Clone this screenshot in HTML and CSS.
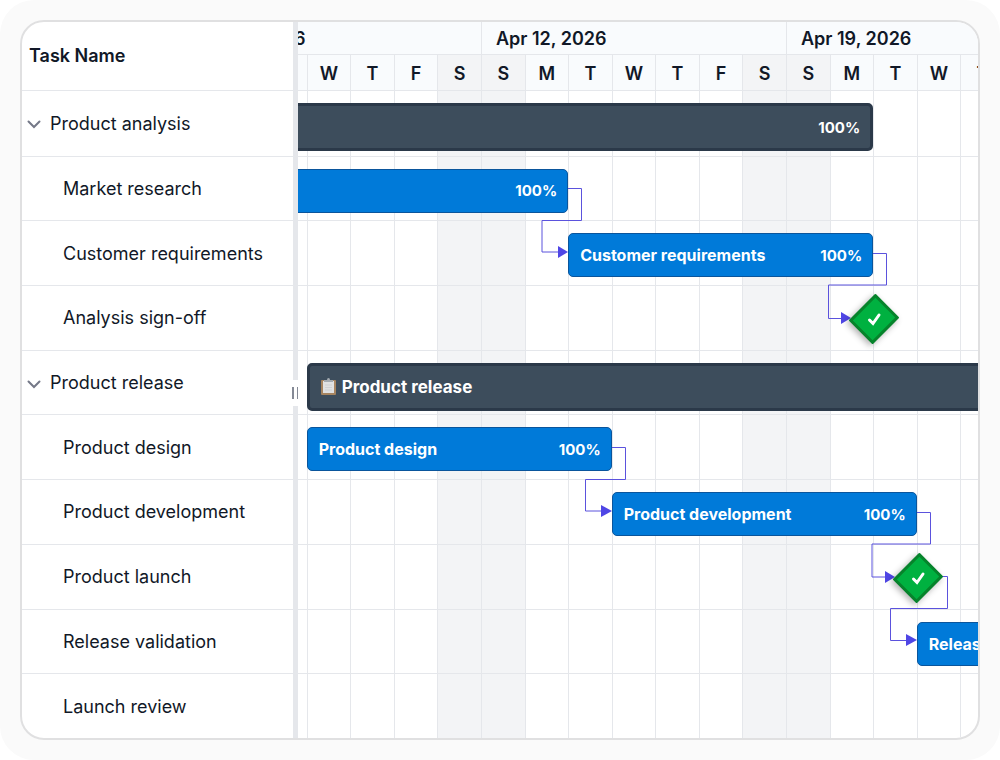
FILE: index.html
```html
<!DOCTYPE html>
<html lang="en">
<head>
  <meta charset="UTF-8">
  <meta name="viewport" content="width=device-width, initial-scale=1">
  <title>Gantt Chart</title>
  <link rel="stylesheet" href="styles.css">
</head>
<body>
  <main class="gantt">
    <table class="task-list">
      <thead>
        <tr><th scope="col">Task Name</th></tr>
      </thead>
      <tbody>
        <tr><td class="parent"><button class="toggle" type="button" aria-label="Collapse"><svg width="14" height="9" viewBox="0 0 14 9"><path d="M1.5 1.5 L7 7 L12.5 1.5" /></svg></button>Product analysis</td></tr>
        <tr><td>Market research</td></tr>
        <tr><td>Customer requirements</td></tr>
        <tr><td>Analysis sign-off</td></tr>
        <tr><td class="parent"><button class="toggle" type="button" aria-label="Collapse"><svg width="14" height="9" viewBox="0 0 14 9"><path d="M1.5 1.5 L7 7 L12.5 1.5" /></svg></button>Product release</td></tr>
        <tr><td>Product design</td></tr>
        <tr><td>Product development</td></tr>
        <tr><td>Product launch</td></tr>
        <tr><td>Release validation</td></tr>
        <tr><td>Launch review</td></tr>
      </tbody>
    </table>

    <div class="splitter">
      <button class="handle" type="button" aria-label="Resize"></button>
    </div>

    <div class="chart">
      <div class="timeline">
        <div class="weeks">
          <div>Apr 05, 2026</div>
          <div>Apr 12, 2026</div>
          <div>Apr 19, 2026</div>
        </div>
        <div class="days">
          <span class="weekend">S</span><span>M</span><span>T</span><span>W</span><span>T</span><span>F</span><span class="weekend">S</span>
          <span class="weekend">S</span><span>M</span><span>T</span><span>W</span><span>T</span><span>F</span><span class="weekend">S</span>
          <span class="weekend">S</span><span>M</span><span>T</span><span>W</span><span>T</span><span>F</span><span class="weekend">S</span>
        </div>

        <div class="plot">
          <div class="columns">
            <i class="weekend"></i><i></i><i></i><i></i><i></i><i></i><i class="weekend"></i>
            <i class="weekend"></i><i></i><i></i><i></i><i></i><i></i><i class="weekend"></i>
            <i class="weekend"></i><i></i><i></i><i></i><i></i><i></i><i class="weekend"></i>
          </div>

          <div class="rows">
            <div class="row">
              <div class="bar summary from-start to-apr20"><span></span><span class="percent">100%</span></div>
            </div>
            <div class="row">
              <div class="bar from-start to-apr13"><span></span><span class="percent">100%</span></div>
            </div>
            <div class="row">
              <div class="bar from-apr14 to-apr20"><span>Customer requirements</span><span class="percent">100%</span></div>
            </div>
            <div class="row">
              <div class="milestone from-apr21"><svg width="18" height="18" viewBox="0 0 18 18"><path d="M4.5 10 L8 13.5 L14 5" /></svg></div>
            </div>
            <div class="row">
              <div class="bar summary from-apr08 to-end">
                <span class="title"><svg class="clipboard" width="18" height="20" viewBox="0 0 18 20"><rect x="1" y="3" width="15" height="15" rx="1" fill="#a68460" /><rect x="3" y="4" width="11" height="12" fill="#e0e1e2" /><path d="M5 8h7M5 10.5h7M5 13h7" stroke="#cfd1d4" /><path d="M4 5 V3 H7 Q7 1 8.500 1 Q10 1 10 3 H13 V5 Z" fill="#a4aab0" /></svg>Product release</span>
              </div>
            </div>
            <div class="row">
              <div class="bar from-apr08 to-apr14"><span>Product design</span><span class="percent">100%</span></div>
            </div>
            <div class="row">
              <div class="bar from-apr15 to-apr21"><span>Product development</span><span class="percent">100%</span></div>
            </div>
            <div class="row">
              <div class="milestone from-apr22"><svg width="18" height="18" viewBox="0 0 18 18"><path d="M4.5 10 L8 13.5 L14 5" /></svg></div>
            </div>
            <div class="row">
              <div class="bar from-apr22 to-end"><span>Release validation</span></div>
            </div>
            <div class="row"></div>
          </div>

          <svg class="links" viewBox="0 0 915 647" preserveAspectRatio="none">
            <path class="line" d="M392 97.5 H405.5 V129.5 H366 V161 H383" />
            <path class="line" d="M697 162.5 H710.5 V194 H652.5 V227.5 H666" />
            <path class="line" d="M436 356.5 H449.5 V388.5 H409.5 V420 H426" />
            <path class="line" d="M741 421.5 H754.5 V453 H696 V486 H710" />
            <path class="line" d="M764 485.5 H771.5 V517.5 H714.5 V549.5 H731" />
            <path class="arrow" d="M382 155 L392 161 L382 167 Z" />
            <path class="arrow" d="M665 221 L675 227 L665 233 Z" />
            <path class="arrow" d="M425 414 L436 420 L425 426 Z" />
            <path class="arrow" d="M709 480 L719 486 L709 492 Z" />
            <path class="arrow" d="M730 543 L741 549 L730 555 Z" />
          </svg>
        </div>
      </div>
    </div>
  </main>
</body>
</html>
```
FILE: styles.css
```css
*,
*::before {
  box-sizing: border-box;
}
html {
  background: #fff;
}
body {
  display: flex;
  min-height: 100vh;
  margin: 0;
  padding: 20px;
  background: #fafafa;
  border-radius: 34px;
  font-family: Inter, "Liberation Sans", sans-serif;
  font-size: 18px;
  color: #111827;
}
button {
  margin: 0;
  padding: 0;
  border: none;
  background: none;
  cursor: pointer;
}
.gantt {
  display: flex;
  flex: 1;
  min-width: 0;
  background: #fff;
  border: 2px solid #e0e0e1;
  border-radius: 24px;
  overflow: hidden;
}

/* task list */
.task-list {
  flex: none;
  width: 271px;
  border-collapse: separate;
  border-spacing: 0;
}
.task-list th {
  height: 69px;
  padding: 0 7px 2px;
  border-bottom: 1px solid #e5e7eb;
  text-align: left;
  font-weight: 600;
}
.task-list td {
  height: 60px;
  padding: 0 0 0 41px;
  border-top: 1px solid #e5e7eb;
  white-space: nowrap;
}
.task-list tr:first-child td {
  border-top: none;
}
.task-list .parent {
  padding-left: 5px;
}
.toggle {
  width: 14px;
  margin-right: 9px;
  vertical-align: middle;
}
.toggle svg {
  display: block;
  fill: none;
  stroke: #747887;
  stroke-width: 2;
  stroke-linecap: round;
}

/* splitter */
.splitter {
  position: relative;
  flex: none;
  width: 5px;
  background: #e5e7eb;
}
.handle {
  position: absolute;
  top: 50%;
  left: -3px;
  width: 8px;
  height: 26px;
  background: #fff;
  cursor: col-resize;
}
.handle::before {
  content: "";
  display: block;
  width: 6px;
  height: 12px;
  margin-left: 2px;
  border: solid #858a96;
  border-width: 0 1px 0 2px;
}

/* timeline, scrolled to the middle of the first week */
.chart {
  flex: 1;
  min-width: 0;
  overflow: hidden;
}
.timeline {
  display: flex;
  flex-direction: column;
  width: 915px;
  height: 100%;
  margin-left: -122px;
}
.weeks {
  display: grid;
  grid-template-columns: repeat(3, 1fr);
  height: 33px;
  background: #f9fbfd;
  border-bottom: 1px solid #e5e7eb;
  font-weight: 600;
  line-height: 34px;
}
.weeks div {
  padding-left: 14px;
  border-left: 1px solid #e5e7eb;
}
.days,
.columns,
.row {
  display: grid;
  grid-template-columns: repeat(21, 1fr);
}
.days {
  height: 36px;
  background: #f9fbfd;
  border-bottom: 1px solid #e5e7eb;
  font-weight: 600;
  line-height: 38px;
  text-align: center;
}
.days span,
.columns i {
  border-left: 1px solid #e5e7eb;
}
.days span {
  height: 35px;
}
.weekend {
  background: #f3f4f6;
}
.plot {
  display: grid;
  flex: 1;
}
.columns,
.rows,
.links {
  grid-area: 1 / 1;
}
.rows {
  display: grid;
  grid-auto-rows: 1fr;
}
.row {
  min-height: 60px;
  align-items: start;
}
.row + .row {
  border-top: 1px solid #e5e7eb;
}

/* bars */
.bar {
  display: flex;
  align-items: center;
  justify-content: space-between;
  grid-row: 1;
  height: 44px;
  margin-top: 12px;
  padding: 0 10px 0 11px;
  background: #007ad9;
  border: 1px solid #0a559c;
  border-radius: 5px;
  font-size: 16px;
  font-weight: 700;
  color: #fff;
  white-space: nowrap;
}
.summary {
  height: 48px;
  padding-left: 10px;
  background: #3d4d5c;
  border: 3px solid #2b3949;
  font-size: 17px;
}
.title {
  display: flex;
  align-items: center;
  gap: 4px;
}
.percent {
  font-size: 15px;
}
.from-start { grid-column-start: 1; }
.from-apr08 { grid-column-start: 4; }
.from-apr14 { grid-column-start: 10; }
.from-apr15 { grid-column-start: 11; }
.from-apr21 { grid-column-start: 17; }
.from-apr22 { grid-column-start: 18; }
.to-apr13 { grid-column-end: 10; }
.to-apr14 { grid-column-end: 11; }
.to-apr20 { grid-column-end: 17; }
.to-apr21 { grid-column-end: 18; }
.to-end { grid-column-end: 22; }

.milestone {
  z-index: 1;
  display: flex;
  align-items: center;
  justify-content: center;
  width: 34px;
  height: 38px;
  margin: 14px 0 0 -16px;
  background: #00b140;
  border: 3px solid #06832b;
  border-radius: 1px;
  box-shadow: 0 3px 6px rgba(0, 0, 0, 0.3);
  transform: rotate(45deg);
}
.milestone svg {
  flex: none;
  fill: none;
  stroke: #fff;
  stroke-width: 3;
  stroke-linecap: round;
  transform: rotate(-45deg);
}

/* dependency links */
.links {
  width: 100%;
  height: 100%;
}
.line {
  fill: none;
  stroke: #5b52dd;
}
.arrow {
  fill: #4f46e5;
}
```
